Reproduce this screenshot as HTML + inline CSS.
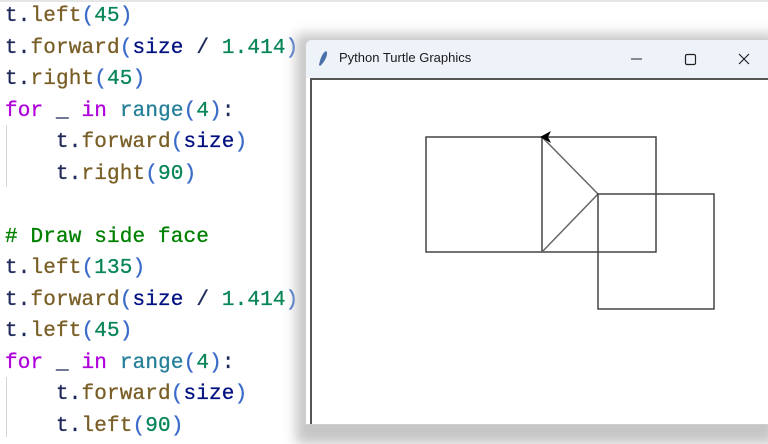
<!DOCTYPE html>
<html><head><style>
html,body{margin:0;padding:0}
body{width:768px;height:437px;overflow:hidden;background:#fff;position:relative;font-family:"Liberation Sans",sans-serif}
.topbar{position:absolute;left:0;top:0;width:768px;height:2px;background:#e6e6e6}
pre{position:absolute;left:5px;top:1px;margin:0;font-family:"Liberation Mono",monospace;font-size:21px;letter-spacing:0.15px;line-height:31.5px;color:#1f2a5a;-webkit-text-stroke:0.3px}
.m{color:#795e26}.p{color:#3b6cc9}.n{color:#098658}.k{color:#af00db}.r{color:#267f99}.c{color:#008000}.v{color:#001080}
.guide{position:absolute;left:6px;width:1px;background:#d4d4d4}
.shadow{position:absolute;left:296px;top:34px;width:480px;height:410px;background:#c6c6c6;filter:blur(6px)}
.win{position:absolute;left:305px;top:39px;width:463px;height:384px;background:#fff;border:1px solid #cfcfcf;border-radius:7px 0 0 0;overflow:hidden}
.title{position:absolute;left:0;top:0;width:100%;height:38px;background:#eef2f9}
.title span{position:absolute;left:33px;top:10px;font-size:13px;color:#1a1a1a}
.canvas{position:absolute;left:4px;top:38px;right:0;bottom:0;border-left:2px solid #555;border-top:2px solid #555;background:#fff}
</style></head><body>
<div class="topbar"></div>
<pre><span>t.</span><span class="m">left</span><span class="p">(</span><span class="n">45</span><span class="p">)</span>
t.<span class="m">forward</span><span class="p">(</span><span class="v">size</span> / <span class="n">1.414</span><span class="p">)</span>
t.<span class="m">right</span><span class="p">(</span><span class="n">45</span><span class="p">)</span>
<span class="k">for</span> _ <span class="k">in</span> <span class="r">range</span><span class="p">(</span><span class="n">4</span><span class="p">)</span>:
    t.<span class="m">forward</span><span class="p">(</span><span class="v">size</span><span class="p">)</span>
    t.<span class="m">right</span><span class="p">(</span><span class="n">90</span><span class="p">)</span>

<span class="c"># Draw side face</span>
t.<span class="m">left</span><span class="p">(</span><span class="n">135</span><span class="p">)</span>
t.<span class="m">forward</span><span class="p">(</span><span class="v">size</span> / <span class="n">1.414</span><span class="p">)</span>
t.<span class="m">left</span><span class="p">(</span><span class="n">45</span><span class="p">)</span>
<span class="k">for</span> _ <span class="k">in</span> <span class="r">range</span><span class="p">(</span><span class="n">4</span><span class="p">)</span>:
    t.<span class="m">forward</span><span class="p">(</span><span class="v">size</span><span class="p">)</span>
    t.<span class="m">left</span><span class="p">(</span><span class="n">90</span><span class="p">)</span></pre>
<div class="guide" style="top:125px;height:62px"></div>
<div class="guide" style="top:377px;height:60px"></div>
<div class="shadow"></div>
<div class="win">
 <div class="title">
  <svg style="position:absolute;left:11px;top:10px" width="12" height="18" viewBox="0 0 12 18"><path d="M9 1 C12 3 8 12 3 16 L2 15 C3 10 5 3 9 1Z" fill="#4a6ea8"/></svg>
  <span>Python Turtle Graphics</span>
  <svg style="position:absolute;left:320px;top:10px" width="140" height="18" viewBox="0 0 140 18">
   <line x1="5" y1="9" x2="16" y2="9" stroke="#222" stroke-width="1"/>
   <rect x="59.5" y="4.5" width="10" height="10" rx="1.5" fill="none" stroke="#222" stroke-width="1.2"/>
   <path d="M113 4 L123 14 M123 4 L113 14" stroke="#222" stroke-width="1.2"/>
  </svg>
 </div>
 <div class="canvas"></div>
</div>
<svg style="position:absolute;left:0;top:0" width="768" height="437">
 <g fill="none" stroke="#444" stroke-width="1.5">
  <rect x="426" y="137" width="230" height="115"/>
  <line x1="542" y1="137" x2="542" y2="252"/>
  <polyline points="542,137 598,194 542,252" stroke="#666"/>
  <rect x="598" y="194" width="116" height="115"/>
 </g>
 <path d="M540 137 L551 131 L548 137 L551 143 Z" fill="#000"/>
</svg>
</body></html>
